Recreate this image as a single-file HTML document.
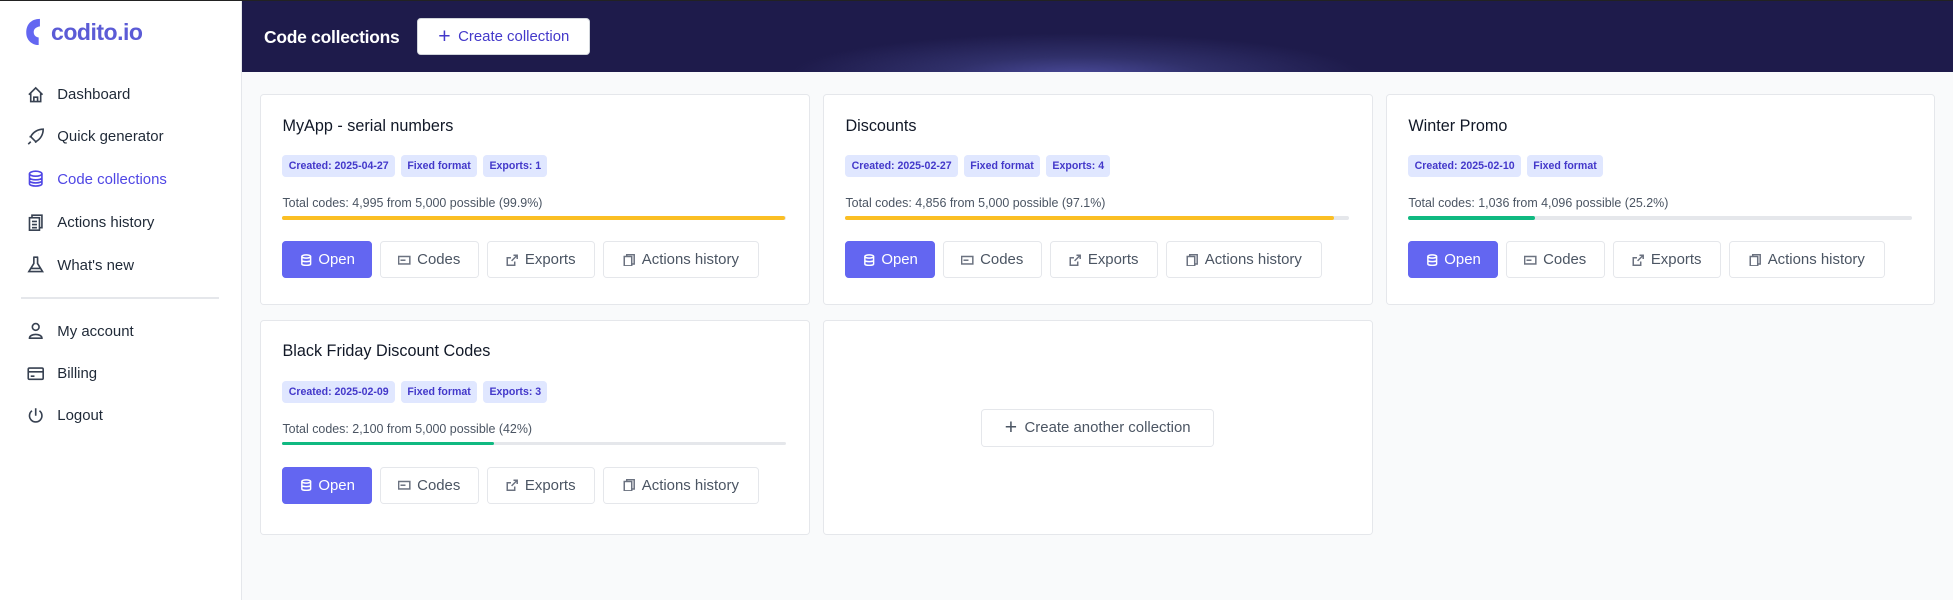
<!DOCTYPE html>
<html><head><meta charset="utf-8"><style>
*{box-sizing:border-box;margin:0;padding:0}
html,body{width:1953px;height:600px;overflow:hidden;background:#f9fafb}
#w{zoom:1.2455;width:1568px;height:482px;position:relative;font-family:"Liberation Sans",sans-serif;background:#f9fafb;border-top:1px solid #222}
.sb{position:absolute;left:0;top:0;width:194px;height:482px;background:#fff;border-right:1px solid #e5e7eb}
.logo{position:absolute;left:20px;top:13px;display:flex;align-items:center}
.logo span{font-size:18.5px;font-weight:bold;color:#5b5bd6;margin-left:7px;letter-spacing:-0.4px}
.nav{position:absolute;left:22px;font-size:12px;color:#1f2937;display:flex;align-items:center;height:20px}
.nav svg{width:14px;height:14px;margin-right:10px;fill:none;stroke:#374151;stroke-width:1.3}
.nav.act{color:#4f46e5}.nav.act svg{stroke:#4f46e5}
.hr{position:absolute;left:17px;top:238px;width:159px;height:1px;background:#e5e7eb}
.hd{position:absolute;left:194px;top:0;width:1374px;height:57px;background:radial-gradient(ellipse 230px 34px at 670px 60px,#4a4a9a 0%,#30306a 45%,rgba(30,27,75,0) 100%),#1e1b4b}
.hd h1{position:absolute;left:18px;top:21px;font-size:14px;color:#fff;font-weight:bold;letter-spacing:-0.2px}
.btnw{position:absolute;left:141px;top:14px;width:139px;height:29px;background:#fff;border:1px solid #d1d5db;border-radius:3px;color:#4338ca;font-size:12px;display:flex;align-items:center;justify-content:center}
.card{position:absolute;width:441px;background:#fff;border:1px solid #e5e7eb;border-radius:3px}
.card h2{position:absolute;left:17px;top:17px;font-size:13px;font-weight:normal;color:#111827}
.bd{position:absolute;left:17px;top:48px;display:flex;gap:5px}
.bd span{background:#e0e7ff;color:#4338ca;font-size:8.5px;font-weight:bold;padding:4px 5px;border-radius:3px}
.tc{position:absolute;left:17px;top:81px;font-size:10px;color:#4b5563}
.pb{position:absolute;left:17px;top:97px;width:404px;height:3px;background:#e5e7eb;border-radius:2px}
.pb i{display:block;height:3px;border-radius:2px}
.bt{position:absolute;top:117px;height:30px;border:1px solid #e5e7eb;border-radius:3px;font-size:12px;color:#4b5563;display:flex;align-items:center;justify-content:center;background:#fff}
.bt svg{width:10px;height:10px;margin-right:5px;fill:none;stroke:#6b7280;stroke-width:1.2}
.bt.o{background:#6366f1;color:#fff;border-color:#6366f1}.bt.o svg{stroke:#fff}
</style></head><body><div id="w">
<div class="sb">
<div class="logo"><svg width="14" height="24" viewBox="0 0 14 24"><path d="M12 1.5 C5 1.5 1 6 1 12.5 C1 18 5 22.5 11 22.5 L11 16.5 C8.5 16 7 14.5 7 12 C7 9.5 9 8 12 7.5 Z" fill="#6366f1"/></svg><span>codito.io</span></div>
<div class="nav" style="top:65px"><svg viewBox="0 0 14 14"><path d="M1.5 7 L7 1.5 L12.5 7 M3 5.5 V12.5 H11 V5.5 M5.5 12.5 V9 H8.5 V12.5"/></svg>Dashboard</div>
<div class="nav" style="top:99px"><svg viewBox="0 0 14 14"><path d="M5 9 L3 7 C5 3 9 1 13 1 C13 5 11 9 7 11 Z M9 4.5 h.1 M3 11 L1 13 M4 7 L2 7 M7 10 V12"/></svg>Quick generator</div>
<div class="nav act" style="top:133px"><svg viewBox="0 0 14 14"><ellipse cx="7" cy="3" rx="5" ry="2"/><path d="M2 3 V11 C2 13.5 12 13.5 12 11 V3 M2 6 C2 8.5 12 8.5 12 6 M2 8.5 C2 11 12 11 12 8.5"/></svg>Code collections</div>
<div class="nav" style="top:168px"><svg viewBox="0 0 14 14"><rect x="2" y="3" width="8" height="10"/><path d="M4 3 V1 H12 V11 H10 M4 6 H8 M4 8.5 H8 M4 11 H8"/></svg>Actions history</div>
<div class="nav" style="top:202px"><svg viewBox="0 0 14 14"><path d="M5 1 H9 M5.5 1 V6 L1.5 12.5 H12.5 L8.5 6 V1 M3 10 H11"/></svg>What's new</div>
<div class="hr"></div>
<div class="nav" style="top:255px"><svg viewBox="0 0 14 14"><circle cx="7" cy="4" r="2.7"/><path d="M2 13 C2 9 12 9 12 13 Z"/></svg>My account</div>
<div class="nav" style="top:289px"><svg viewBox="0 0 14 14"><rect x="1" y="2.5" width="12" height="9" rx="1"/><path d="M1 5.5 H13 M3 9 H6"/></svg>Billing</div>
<div class="nav" style="top:323px"><svg viewBox="0 0 14 14"><path d="M7 1 V7 M4 3 A5 5 0 1 0 10 3"/></svg>Logout</div>
</div>
<div class="hd"><h1>Code collections</h1><div class="btnw"><span style="font-size:17px;font-weight:300;margin-right:6px;line-height:1">+</span>Create collection</div></div>

<div class="card" style="left:209px;top:75px;height:169px"><h2>MyApp - serial numbers</h2>
<div class="bd"><span>Created: 2025-04-27</span><span>Fixed format</span><span>Exports: 1</span></div>
<div class="tc">Total codes: 4,995 from 5,000 possible (99.9%)</div><div class="pb"><i style="width:99.9%;background:#fbbf24"></i></div>
<div class="bt o" style="left:17px;width:72px"><svg viewBox="0 0 10 10"><ellipse cx="5" cy="2" rx="3.5" ry="1.3"/><path d="M1.5 2V8C1.5 9.5 8.5 9.5 8.5 8V2M1.5 5C1.5 6.5 8.5 6.5 8.5 5"/></svg>Open</div>
<div class="bt" style="left:95px;width:80px"><svg viewBox="0 0 10 10"><rect x="0.5" y="2" width="9" height="6"/><path d="M2 5H6"/></svg>Codes</div>
<div class="bt" style="left:181px;width:87px"><svg viewBox="0 0 10 10"><path d="M6 1H9V4M9 1L4.5 5.5M7 6V9H1V3H4"/></svg>Exports</div>
<div class="bt" style="left:274px;width:126px"><svg viewBox="0 0 10 10"><rect x="1" y="2" width="6" height="7.5"/><path d="M3 2V0.5H9V8H7"/></svg>Actions history</div></div>

<div class="card" style="left:661px;top:75px;height:169px"><h2>Discounts</h2>
<div class="bd"><span>Created: 2025-02-27</span><span>Fixed format</span><span>Exports: 4</span></div>
<div class="tc">Total codes: 4,856 from 5,000 possible (97.1%)</div><div class="pb"><i style="width:97.1%;background:#fbbf24"></i></div>
<div class="bt o" style="left:17px;width:72px"><svg viewBox="0 0 10 10"><ellipse cx="5" cy="2" rx="3.5" ry="1.3"/><path d="M1.5 2V8C1.5 9.5 8.5 9.5 8.5 8V2M1.5 5C1.5 6.5 8.5 6.5 8.5 5"/></svg>Open</div>
<div class="bt" style="left:95px;width:80px"><svg viewBox="0 0 10 10"><rect x="0.5" y="2" width="9" height="6"/><path d="M2 5H6"/></svg>Codes</div>
<div class="bt" style="left:181px;width:87px"><svg viewBox="0 0 10 10"><path d="M6 1H9V4M9 1L4.5 5.5M7 6V9H1V3H4"/></svg>Exports</div>
<div class="bt" style="left:274px;width:126px"><svg viewBox="0 0 10 10"><rect x="1" y="2" width="6" height="7.5"/><path d="M3 2V0.5H9V8H7"/></svg>Actions history</div></div>

<div class="card" style="left:1113px;top:75px;height:169px"><h2>Winter Promo</h2>
<div class="bd"><span>Created: 2025-02-10</span><span>Fixed format</span></div>
<div class="tc">Total codes: 1,036 from 4,096 possible (25.2%)</div><div class="pb"><i style="width:25.2%;background:#10b981"></i></div>
<div class="bt o" style="left:17px;width:72px"><svg viewBox="0 0 10 10"><ellipse cx="5" cy="2" rx="3.5" ry="1.3"/><path d="M1.5 2V8C1.5 9.5 8.5 9.5 8.5 8V2M1.5 5C1.5 6.5 8.5 6.5 8.5 5"/></svg>Open</div>
<div class="bt" style="left:95px;width:80px"><svg viewBox="0 0 10 10"><rect x="0.5" y="2" width="9" height="6"/><path d="M2 5H6"/></svg>Codes</div>
<div class="bt" style="left:181px;width:87px"><svg viewBox="0 0 10 10"><path d="M6 1H9V4M9 1L4.5 5.5M7 6V9H1V3H4"/></svg>Exports</div>
<div class="bt" style="left:274px;width:126px"><svg viewBox="0 0 10 10"><rect x="1" y="2" width="6" height="7.5"/><path d="M3 2V0.5H9V8H7"/></svg>Actions history</div></div>

<div class="card" style="left:209px;top:256px;height:173px"><h2>Black Friday Discount Codes</h2>
<div class="bd"><span>Created: 2025-02-09</span><span>Fixed format</span><span>Exports: 3</span></div>
<div class="tc">Total codes: 2,100 from 5,000 possible (42%)</div><div class="pb"><i style="width:42%;background:#10b981"></i></div>
<div class="bt o" style="left:17px;width:72px"><svg viewBox="0 0 10 10"><ellipse cx="5" cy="2" rx="3.5" ry="1.3"/><path d="M1.5 2V8C1.5 9.5 8.5 9.5 8.5 8V2M1.5 5C1.5 6.5 8.5 6.5 8.5 5"/></svg>Open</div>
<div class="bt" style="left:95px;width:80px"><svg viewBox="0 0 10 10"><rect x="0.5" y="2" width="9" height="6"/><path d="M2 5H6"/></svg>Codes</div>
<div class="bt" style="left:181px;width:87px"><svg viewBox="0 0 10 10"><path d="M6 1H9V4M9 1L4.5 5.5M7 6V9H1V3H4"/></svg>Exports</div>
<div class="bt" style="left:274px;width:126px"><svg viewBox="0 0 10 10"><rect x="1" y="2" width="6" height="7.5"/><path d="M3 2V0.5H9V8H7"/></svg>Actions history</div></div>

<div class="card" style="left:661px;top:256px;height:173px">
<div class="bt" style="left:126px;top:71px;width:187px;height:30px"><span style="font-size:17px;font-weight:300;margin-right:6px;line-height:1">+</span>Create another collection</div></div>
</div></body></html>
